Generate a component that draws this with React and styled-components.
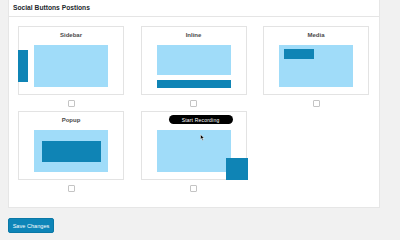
import React from "react";
import styled, { createGlobalStyle } from "styled-components";

const GlobalStyle = createGlobalStyle`
  body {
    margin: 0;
    background: #f1f1f1;
    font-family: "Liberation Sans", Arial, sans-serif;
  }
`;

const LIGHT = "#a0dcf9";
const DARK = "#0f84b5";

const Page = styled.div`
  padding-left: 8px;
  width: 372px;
`;

const Panel = styled.section`
  background: #fff;
  border: 1px solid #e6e6e6;
  border-top: none;
`;

const PanelHeader = styled.h2`
  margin: 0;
  height: 17px;
  padding: 0 0 1px 4px;
  box-sizing: border-box;
  display: flex;
  align-items: center;
  border-bottom: 1px solid #e5e5e5;
  font-size: 6.7px;
  font-weight: 700;
  color: #23282d;
`;

const Grid = styled.div`
  display: grid;
  grid-template-columns: repeat(3, 106px);
  column-gap: 16.5px;
  row-gap: 4.5px;
  padding: 9px 0 15.5px 9px;
`;

const Item = styled.div`
  display: flex;
  flex-direction: column;
  align-items: center;
`;

const Card = styled.div`
  position: relative;
  width: 106px;
  height: 69px;
  box-sizing: border-box;
  border: 1px solid #e3e3e3;
  padding-top: 4px;
  display: flex;
  flex-direction: column;
  align-items: center;
`;

const Title = styled.div`
  height: 8px;
  line-height: 8px;
  font-size: 6px;
  font-weight: 700;
  color: #4a4a4a;
  margin-bottom: 6px;
`;

const Screen = styled.div`
  position: relative;
  width: 74px;
  height: ${(p) => p.$h}px;
  background: ${LIGHT};
  display: flex;
  align-items: center;
  justify-content: center;
`;

const InlineBar = styled.div`
  margin-top: 5px;
  width: 74px;
  height: 8px;
  background: ${DARK};
`;

const SideStrip = styled.div`
  position: absolute;
  left: -1px;
  top: 23px;
  width: 10px;
  height: 32px;
  background: ${DARK};
`;

const MediaBox = styled.div`
  position: absolute;
  left: 5px;
  top: 4px;
  width: 30px;
  height: 10px;
  background: ${DARK};
`;

const PopupBox = styled.div`
  width: 59px;
  height: 21px;
  margin-top: 1px;
  background: ${DARK};
`;

const FloatSquare = styled.div`
  position: absolute;
  right: -2px;
  bottom: -1px;
  width: 22px;
  height: 22px;
  background: ${DARK};
`;

const RecordPill = styled.div`
  position: absolute;
  top: 3px;
  left: 27px;
  width: 64px;
  height: 9px;
  border-radius: 5px;
  background: #000;
  color: #fff;
  font-size: 5px;
  font-weight: 400;
  letter-spacing: 0.2px;
  display: flex;
  align-items: center;
  justify-content: center;
`;

const Cursor = styled.svg`
  position: absolute;
  left: 58px;
  top: 22px;
`;

const Check = styled.span`
  margin-top: 4.5px;
  width: 7px;
  height: 7px;
  box-sizing: border-box;
  border: 1px solid #c4c4c4;
  border-radius: 1px;
  background: #fff;
`;

const SaveButton = styled.button`
  margin-top: 10px;
  width: 46px;
  height: 15px;
  padding: 0;
  border: 1px solid #0a78a6;
  border-radius: 2px;
  background: #0e85b8;
  color: #fff;
  font-family: "Liberation Sans", Arial, sans-serif;
  font-size: 5.6px;
  font-weight: 400;
`;

const Position = ({ title, children, extra }) => (
  <Item>
    <Card>
      <Title>{title}</Title>
      {children}
      {extra}
    </Card>
    <Check />
  </Item>
);

export default function App() {
  return (
    <>
      <GlobalStyle />
      <Page>
        <Panel>
          <PanelHeader>Social Buttons Postions</PanelHeader>
          <Grid>
            <Position title="Sidebar" extra={<SideStrip />}>
              <Screen $h={42} />
            </Position>
            <Position title="Inline">
              <Screen $h={30} />
              <InlineBar />
            </Position>
            <Position title="Media">
              <Screen $h={42}>
                <MediaBox />
              </Screen>
            </Position>
            <Position title="Popup">
              <Screen $h={42}>
                <PopupBox />
              </Screen>
            </Position>
            <Position
              title=""
              extra={
                <>
                  <RecordPill>Start Recording</RecordPill>
                  <FloatSquare />
                  <Cursor width="5" height="7" viewBox="0 0 5 7">
                    <path d="M0.5 0.5 L0.5 5.5 L1.7 4.4 L2.6 6.5 L3.4 6.1 L2.5 4.1 L4.2 4.1 Z" fill="#000" stroke="#fff" strokeWidth="0.5" />
                  </Cursor>
                </>
              }
            >
              <Screen $h={42} />
            </Position>
          </Grid>
        </Panel>
        <SaveButton>Save Changes</SaveButton>
      </Page>
    </>
  );
}
